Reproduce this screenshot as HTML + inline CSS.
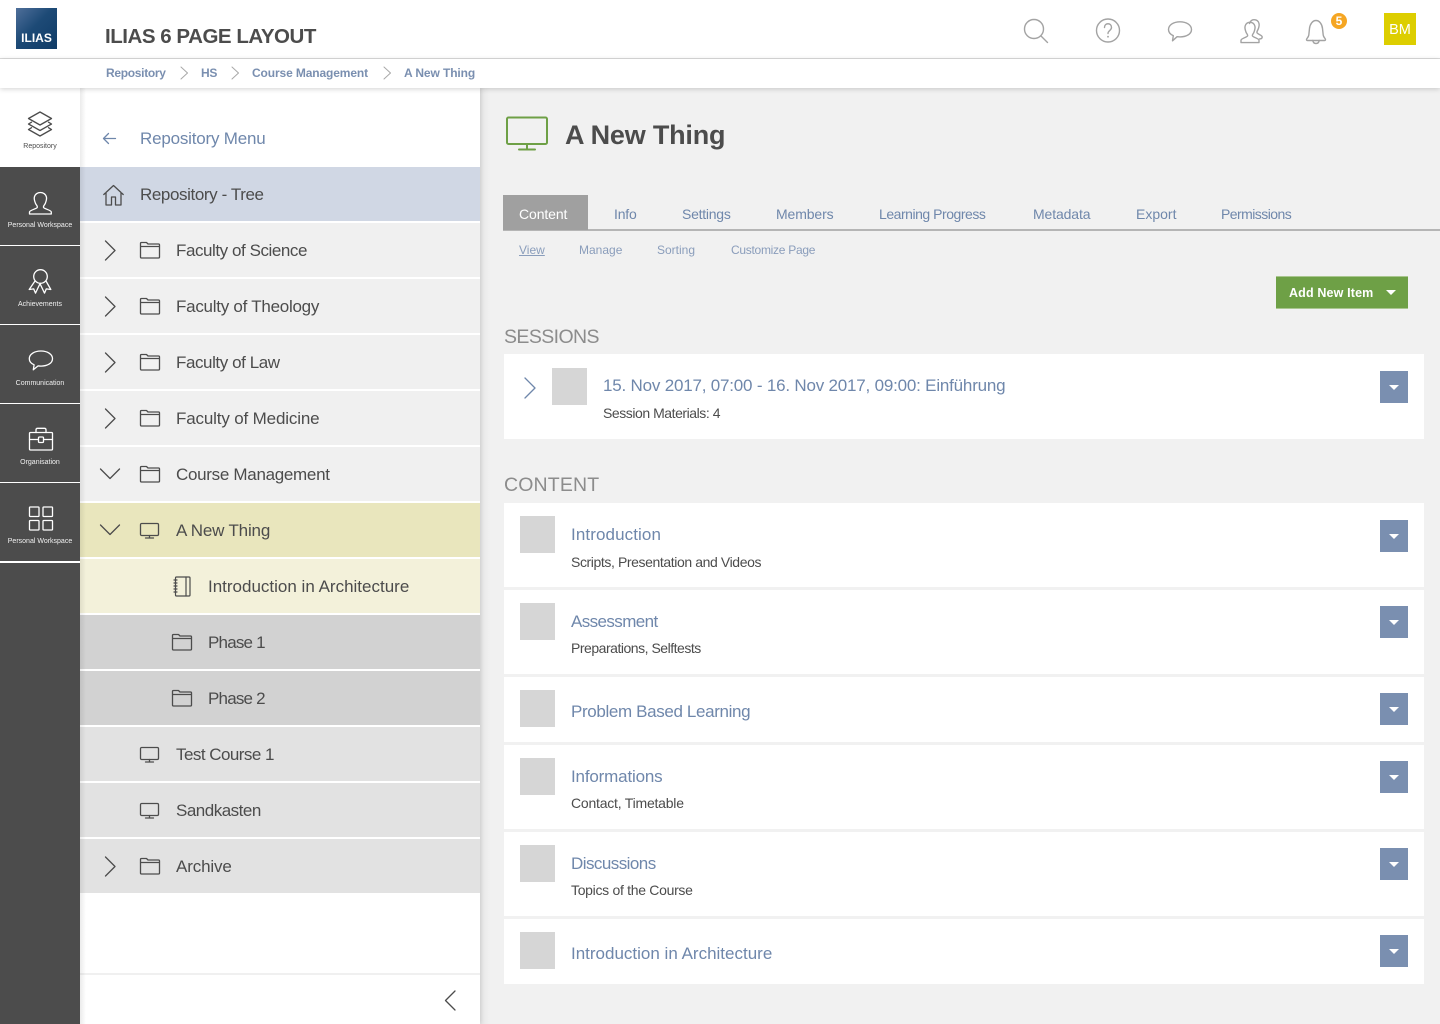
<!DOCTYPE html>
<html lang="en"><head><meta charset="utf-8"><title>ILIAS 6 Page Layout</title>
<style>
*{box-sizing:border-box}
html,body{margin:0;padding:0;width:1440px;height:1024px;overflow:hidden}
body{position:relative;background:#f1f1f1;font-family:"Liberation Sans",sans-serif;color:#4c4c4c}
.a{position:absolute;white-space:nowrap}
svg{position:absolute;overflow:visible;fill:none;stroke-linecap:round;stroke-linejoin:round}
.row{position:absolute;left:80px;width:400px;height:54px}
.rt{position:absolute;top:17px;white-space:nowrap;font-size:17px;line-height:22px;color:#4c4c4c}
.nav{position:absolute;left:0;width:80px;height:79px;background:#4c4c4c;border-bottom:1px solid #fff}
.nl{position:absolute;left:0;width:80px;text-align:center;font-size:7px;line-height:10px;color:#f0f0f0;white-space:nowrap}
.card{position:absolute;left:504px;width:920px;background:#fff}
.ph{position:absolute;left:16px;top:13px;width:35px;height:37px;background:#d6d6d6}
.ct{position:absolute;left:67px;top:21px;font-size:17px;line-height:22px;color:#6f87ab;white-space:nowrap}
.cs{position:absolute;left:67px;top:50px;font-size:14px;line-height:18px;color:#4c4c4c;white-space:nowrap}
.dd{position:absolute;left:876px;top:16px;width:28px;height:32px;background:#7a8fb0}
.dd:after{content:"";position:absolute;left:9px;top:14px;border-left:5px solid transparent;border-right:5px solid transparent;border-top:5px solid #fff}
.tab{position:absolute;top:205px;font-size:14px;line-height:18px;color:#6f87ab;white-space:nowrap}
.sub{position:absolute;top:242px;font-size:12px;line-height:16px;color:#8a9dbb;white-space:nowrap}
.bc{position:absolute;top:65px;font-size:12px;line-height:16px;font-weight:bold;color:#7a8fb0;white-space:nowrap}
</style></head><body>

<!-- main side background -->
<div class="a" style="left:480px;top:88px;width:10px;height:936px;background:linear-gradient(90deg,#e6e6e6,#f1f1f1)"></div>

<!-- Header -->
<div class="a" style="left:0;top:0;width:1440px;height:59px;background:#fff;border-bottom:1px solid #dcdcdc"></div>
<div class="a" style="left:0;top:59px;width:1440px;height:29px;background:#fff;box-shadow:0 1px 5px rgba(0,0,0,.18);z-index:3"></div>
<div class="a" style="left:16px;top:8px;width:41px;height:41px;background:linear-gradient(135deg,#4f6f9a 0%,#1d4a76 45%,#0f3b66 100%)"></div>
<div class="a" style="left:16px;top:31px;width:41px;text-align:center;font-size:12px;line-height:14px;font-weight:bold;color:#fff">ILIAS</div>
<div class="a" style="left:105px;top:24px;font-size:20.5px;line-height:25px;font-weight:bold;letter-spacing:-.47px;color:#4c4c4c">ILIAS 6 PAGE LAYOUT</div>

<svg style="left:0;top:0;z-index:4" width="1440" height="60" stroke="#a3a3a3" stroke-width="1.4">
<circle cx="1034" cy="29" r="9.5"/><path d="M1041 36l6.500 6.500"/>
<circle cx="1108" cy="30.500" r="11.500"/><path d="M1104.500 27.500c0-5 7-5 7 0 0 3-3.500 3-3.500 6"/><path d="M1108 36.600v.2" stroke-width="1.800"/>
<path d="M1180 21.800c6.400 0 11.500 3.200 11.500 7.700 0 4.500-5.100 7.400-11.500 7.400-1 0-1.900-.1-2.900-.2l-4.600 4.100.8-5.100c-3-1.300-4.800-3.600-4.800-6.200 0-4.500 5.100-7.700 11.500-7.700z"/>
<path d="M1241 42.600v-2.300c0-1.800 5.500-2.800 6.500-4.300.7-1.200-.8-2-1.500-3.900-.8-2.100-1.400-3.900-.9-5.900.7-2.800 2.900-3.900 4.900-3.900s4.200 1.100 4.900 3.900c.5 2-.1 3.800-.9 5.900-.7 1.900-2.200 2.700-1.500 3.900 1 1.500 6.500 2.500 6.500 4.300v2.300z"/>
<path d="M1249.500 23.500c.8-2.600 2.700-3.800 4.500-3.800 2.300 0 4.400 1.200 5 3.900.5 2-.1 3.800-.9 5.700-.7 1.700-1.700 2.500-1 3.600.9 1.500 5.100 2.400 5.100 4.100 0 1.500-1 1.900-2.700 1.900"/>
<path d="M1306.500 39.500c0-1.200 2-2 2.300-4.500l.7-6.500c.4-4.200 3-8 6.500-8s6.100 3.800 6.500 8l.7 6.500c.3 2.500 2.300 3.300 2.300 4.500 0 .7-.5 1-1.200 1h-16.600c-.7 0-1.200-.3-1.200-1z"/>
<path d="M1312.800 40.500c.3 2 1.700 3 3.200 3s2.900-1 3.200-3"/>
</svg>
<div class="a" style="left:1331px;top:13px;width:16px;height:16px;border-radius:50%;background:#f5a623;color:#fff;font-size:12px;line-height:16px;text-align:center;font-weight:bold;z-index:4">5</div>
<div class="a" style="left:1384px;top:13px;width:32px;height:32px;background:#ddce00;color:#fff;font-size:14.5px;line-height:34px;text-align:center;z-index:4">BM</div>

<!-- Breadcrumb -->
<div style="position:absolute;left:0;top:0;z-index:5">
<div class="bc" style="left:106px;letter-spacing:-.3px">Repository</div>
<div class="bc" style="left:201px;letter-spacing:-.3px">HS</div>
<div class="bc" style="left:252px;letter-spacing:-.12px">Course Management</div>
<div class="bc" style="left:404px;letter-spacing:-.1px">A New Thing</div>
<svg style="left:0;top:0" width="500" height="90" stroke="#a8a8a8" stroke-width="1"><path d="M181 67l6.500 6-6.500 6M232 67l6.500 6-6.500 6M384 67l6.500 6-6.500 6"/></svg>
</div>

<!-- Tree panel -->
<div class="a" style="left:80px;top:88px;width:400px;height:936px;background:#fff;box-shadow:1px 0 4px rgba(0,0,0,.12)"></div>
<svg style="left:0;top:0;z-index:1" width="480" height="200" stroke="#6f87ab" stroke-width="1.300"><path d="M103.500 138.500h12M108.500 133.500l-5 5 5 5"/></svg>
<div class="a" style="left:140px;top:128px;font-size:17px;line-height:22px;letter-spacing:-.2px;color:#6f87ab;z-index:1">Repository Menu</div>

<div class="row" style="top:167px;background:#d0d7e4"><div class="rt" style="left:60px;letter-spacing:-.4px">Repository - Tree</div></div>
<div class="row" style="top:223px;background:#f0f0f0"><div class="rt" style="left:96px;letter-spacing:-.44px">Faculty of Science</div></div>
<div class="row" style="top:279px;background:#f0f0f0"><div class="rt" style="left:96px;letter-spacing:-.26px">Faculty of Theology</div></div>
<div class="row" style="top:335px;background:#f0f0f0"><div class="rt" style="left:96px;letter-spacing:-.43px">Faculty of Law</div></div>
<div class="row" style="top:391px;background:#f0f0f0"><div class="rt" style="left:96px;letter-spacing:-.16px">Faculty of Medicine</div></div>
<div class="row" style="top:447px;background:#f0f0f0"><div class="rt" style="left:96px;letter-spacing:-.3px">Course Management</div></div>
<div class="row" style="top:503px;background:#e9e6bd"><div class="rt" style="left:96px;letter-spacing:-.18px">A New Thing</div></div>
<div class="row" style="top:559px;background:#f3f1da"><div class="rt" style="left:128px">Introduction in Architecture</div></div>
<div class="row" style="top:615px;background:#d2d2d2"><div class="rt" style="left:128px;letter-spacing:-.8px">Phase 1</div></div>
<div class="row" style="top:671px;background:#d2d2d2"><div class="rt" style="left:128px;letter-spacing:-.8px">Phase 2</div></div>
<div class="row" style="top:727px;background:#e2e2e2"><div class="rt" style="left:96px;letter-spacing:-.54px">Test Course 1</div></div>
<div class="row" style="top:783px;background:#e2e2e2"><div class="rt" style="left:96px;letter-spacing:-.5px">Sandkasten</div></div>
<div class="row" style="top:839px;background:#e2e2e2"><div class="rt" style="left:96px;letter-spacing:-.14px">Archive</div></div>

<div class="a" style="left:80px;top:973px;width:400px;height:2px;background:#f0f0f0"></div>
<div class="a" style="left:80px;top:88px;width:6px;height:936px;background:linear-gradient(90deg,rgba(0,0,0,.08),rgba(0,0,0,0));z-index:2"></div>

<svg style="left:0;top:0;z-index:2" width="480" height="1024" stroke="#4c4c4c" stroke-width="1.300">
<defs>
<path id="f" d="M.5 15V1.500c0-.6.4-1 1-1h5l1.500 1.500h10.500c.6 0 1 .4 1 1V15c0 .6-.4 1-1 1h-17c-.6 0-1-.4-1-1zM.5 4.500h19"/>
<g id="m"><rect x=".5" y=".5" width="18" height="12" rx="1.200"/><path d="M9.500 12.500v2.500M5.500 15h8"/></g>
<path id="r" d="M0 0l9.500 9.500L0 19"/>
<path id="d" d="M0 0l9.500 9.500L19 0"/>
</defs>
<path d="M103.800 194.500l9.700-9 9.700 9M106 192.500V205h5.500v-8h4v8h5.500v-12.500"/>
<use href="#r" x="105.500" y="241"/><use href="#f" x="140" y="242"/>
<use href="#r" x="105.500" y="297"/><use href="#f" x="140" y="298"/>
<use href="#r" x="105.500" y="353"/><use href="#f" x="140" y="354"/>
<use href="#r" x="105.500" y="409"/><use href="#f" x="140" y="410"/>
<use href="#d" x="100.500" y="469"/><use href="#f" x="140" y="466"/>
<use href="#d" x="100.500" y="525"/><use href="#m" x="140" y="523"/>
<g stroke-width="1.200"><rect x="175.500" y="577" width="14.500" height="19" rx="1"/><path d="M186 577v19M174 580h3M174 583h3M174 586h3M174 589h3M174 592h3"/></g>
<use href="#f" x="172" y="634"/>
<use href="#f" x="172" y="690"/>
<use href="#m" x="140" y="747"/>
<use href="#m" x="140" y="803"/>
<use href="#r" x="105.500" y="857"/><use href="#f" x="140" y="858"/>
<path d="M455 991l-9.500 9.500 9.500 9.500"/>
</svg>

<!-- Main bar -->
<div class="a" style="left:0;top:88px;width:80px;height:936px;background:#4c4c4c;z-index:2"></div>
<div class="a" style="left:0;top:88px;width:80px;height:79px;background:#fff;z-index:2"></div>
<div style="position:absolute;left:0;top:0;z-index:2">
<div class="nav" style="top:167px"></div>
<div class="nav" style="top:246px"></div>
<div class="nav" style="top:325px"></div>
<div class="nav" style="top:404px"></div>
<div class="nav" style="top:483px;height:80px;border-bottom-width:2px"></div>
<div class="nl" style="top:142px;color:#4c4c4c">Repository</div>
<div class="nl" style="top:221px">Personal Workspace</div>
<div class="nl" style="top:300px">Achievements</div>
<div class="nl" style="top:379px">Communication</div>
<div class="nl" style="top:458px">Organisation</div>
<div class="nl" style="top:537px">Personal Workspace</div>
<svg style="left:0;top:0" width="80" height="570" stroke="#4c4c4c" stroke-width="1.300">
<path d="M40 112l11.500 6.500L40 125l-11.500-6.500z"/><path d="M31.500 122.200l-3 1.800L40 130.500 51.500 124l-3-1.800M31.500 127.700l-3 1.800L40 136l11.500-6.500-3-1.800"/>
<g stroke="#fff">
<path d="M29.500 214v-2c0-1.800 6.500-2.900 7.700-4.500.8-1.200-1-2.300-1.800-4.400-.9-2.400-1.600-4.100-1-6.200.8-3 3.500-4.400 6-4.400s5.200 1.400 6 4.400c.6 2.100-.1 3.800-1 6.200-.8 2.100-2.600 3.200-1.800 4.400 1.200 1.600 7.700 2.700 7.700 4.500v2z"/>
<circle cx="40.500" cy="276.500" r="6.800"/><path d="M35 281l-5.800 8.500 4.500-.6 1.800 4.200 4.500-9.500 4.500 9.500 1.800-4.200 4.500.6L46 281"/>
<path d="M41 351c6.400 0 11.500 3.200 11.500 7.700s-5.100 7.400-11.500 7.400c-1 0-1.900-.1-2.900-.2l-4.800 3.900.8-5c-3-1.300-4.800-3.600-4.800-6.100 0-4.500 5.100-7.700 11.500-7.700z"/>
<rect x="29.500" y="432.500" width="23" height="17.500" rx="1"/><path d="M36 432.500v-2.600c0-1 .6-1.600 1.500-1.600h7c.9 0 1.500.6 1.500 1.600v2.600M29.500 439.500h8.500M44 439.500h8.500"/><rect x="38.500" y="437" width="5" height="5.500" rx="1"/>
<rect x="29.500" y="507" width="9.500" height="9.500" rx=".7"/><rect x="43" y="507" width="9.500" height="9.500" rx=".7"/><rect x="29.500" y="520.500" width="9.500" height="9.500" rx=".7"/><rect x="43" y="520.500" width="9.500" height="9.500" rx=".7"/>
</g>
</svg>
</div>

<!-- Title -->
<svg style="left:0;top:0" width="560" height="160" stroke="#6ea046" stroke-width="2"><rect x="507" y="117.500" width="40" height="26.500" rx="1.500"/><path d="M527 144.500v5M519 149.500h16"/></svg>
<div class="a" style="left:565px;top:117px;font-size:27px;line-height:36px;font-weight:bold;letter-spacing:-.2px;color:#4c4c4c">A New Thing</div>

<!-- Tabs -->
<div class="a" style="left:503px;top:229px;width:937px;height:2px;background:#b5b5b5"></div>
<div class="a" style="left:503px;top:195px;width:85px;height:35px;background:#a0a0a0"></div>
<div class="tab" style="left:519px;color:#fff;letter-spacing:-.1px">Content</div>
<div class="tab" style="left:614px;letter-spacing:-.2px">Info</div>
<div class="tab" style="left:682px;letter-spacing:-.25px">Settings</div>
<div class="tab" style="left:776px;letter-spacing:-.12px">Members</div>
<div class="tab" style="left:879px;letter-spacing:-.47px">Learning Progress</div>
<div class="tab" style="left:1033px;letter-spacing:-.12px">Metadata</div>
<div class="tab" style="left:1136px">Export</div>
<div class="tab" style="left:1221px;letter-spacing:-.55px">Permissions</div>
<div class="sub" style="left:519px;text-decoration:underline">View</div>
<div class="sub" style="left:579px">Manage</div>
<div class="sub" style="left:657px">Sorting</div>
<div class="sub" style="left:731px;letter-spacing:-.28px">Customize Page</div>

<!-- Button -->
<div class="a" style="left:1276px;top:276px;width:132px;height:33px;background:#6ea046;border-top:1px solid #a9c68f;border-bottom:1px solid #a9c68f"></div>
<div class="a" style="left:1289px;top:286px;font-size:12.5px;line-height:15px;font-weight:bold;letter-spacing:.15px;color:#fff">Add New Item</div>
<div class="a" style="left:1386px;top:290px;border-left:5px solid transparent;border-right:5px solid transparent;border-top:5px solid #fff"></div>

<!-- Sessions -->
<div class="a" style="left:504px;top:325px;font-size:19.5px;line-height:25px;letter-spacing:-.6px;color:#8c8c8c">SESSIONS</div>
<div class="card" style="top:354px;height:85px">
<div class="ph" style="left:48px;top:14px"></div>
<svg style="left:0;top:0" width="60" height="60" stroke="#6f87ab" stroke-width="1.300"><path d="M21 24l10 10-10 10"/></svg>
<div class="ct" style="left:99px;letter-spacing:-.2px">15. Nov 2017, 07:00 - 16. Nov 2017, 09:00: Einführung</div>
<div class="cs" style="left:99px;letter-spacing:-.45px">Session Materials: 4</div>
<div class="dd" style="top:17px"></div>
</div>

<!-- Content -->
<div class="a" style="left:504px;top:473px;font-size:19.5px;line-height:25px;letter-spacing:.15px;color:#8c8c8c">CONTENT</div>
<div class="card" style="top:503px;height:84px"><div class="ph"></div><div class="ct" style="letter-spacing:.1px">Introduction</div><div class="cs" style="letter-spacing:-.4px">Scripts, Presentation and Videos</div><div class="dd" style="top:17px"></div></div>
<div class="card" style="top:590px;height:84px"><div class="ph"></div><div class="ct" style="letter-spacing:-.6px">Assessment</div><div class="cs" style="top:49px;letter-spacing:-.48px">Preparations, Selftests</div><div class="dd"></div></div>
<div class="card" style="top:677px;height:65px"><div class="ph"></div><div class="ct" style="top:24px;letter-spacing:-.36px">Problem Based Learning</div><div class="dd"></div></div>
<div class="card" style="top:745px;height:84px"><div class="ph"></div><div class="ct" style="letter-spacing:-.17px">Informations</div><div class="cs" style="top:49px;letter-spacing:-.22px">Contact, Timetable</div><div class="dd"></div></div>
<div class="card" style="top:832px;height:84px"><div class="ph"></div><div class="ct" style="letter-spacing:-.55px">Discussions</div><div class="cs" style="top:49px;letter-spacing:-.3px">Topics of the Course</div><div class="dd"></div></div>
<div class="card" style="top:919px;height:65px"><div class="ph"></div><div class="ct" style="top:24px">Introduction in Architecture</div><div class="dd"></div></div>

</body></html>
